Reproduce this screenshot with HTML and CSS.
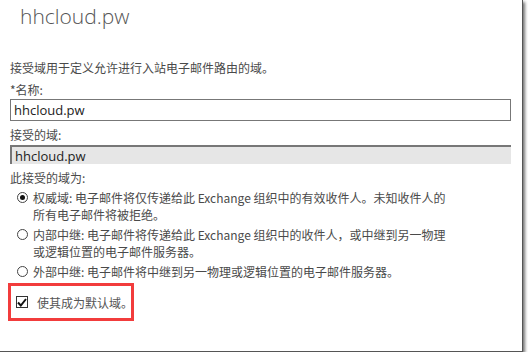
FILE: index.html
```html
<!DOCTYPE html>
<html lang="zh-CN">
<head>
  <meta charset="UTF-8">
  <link rel="stylesheet" href="styles.css">
  <title>hhcloud.pw</title>
</head>
<body>
  <div class="card">
    <h1 class="title">hhcloud.pw</h1>

    <div class="form">
      <p class="intro">接受域用于定义允许进行入站电子邮件路由的域。</p>

      <label class="label" for="name">*名称:</label>
      <input class="field" type="text" id="name" value="hhcloud.pw">

      <label class="label" for="domain">接受的域:</label>
      <input class="field field-disabled" type="text" id="domain" value="hhcloud.pw" disabled>

      <div class="label">此接受的域为:</div>

      <div class="options">
        <div class="option">
          <span class="radio checked"></span>
          <span class="option-text">权威域: 电子邮件将仅传递给此 Exchange 组织中的有效收件人。未知收件人的<br>所有电子邮件将被拒绝。</span>
        </div>
        <div class="option">
          <span class="radio"></span>
          <span class="option-text">内部中继: 电子邮件将传递给此 Exchange 组织中的收件人，或中继到另一物理<br>或逻辑位置的电子邮件服务器。</span>
        </div>
        <div class="option">
          <span class="radio"></span>
          <span class="option-text">外部中继: 电子邮件将中继到另一物理或逻辑位置的电子邮件服务器。</span>
        </div>
      </div>

      <div class="highlight">
        <span class="checkbox">
          <svg width="10" height="9" viewBox="0 0 10 9"><path d="M1 4.5 L3.8 7.5 L9 1" fill="none" stroke="#111" stroke-width="2"/></svg>
        </span>
        <span class="check-text">使其成为默认域。</span>
      </div>
    </div>
  </div>
</body>
</html>
```

FILE: styles.css
```css
body {
  margin: 0;
  background: #ffffff;
  font-family: "Segoe UI", "Noto Sans CJK SC", "Noto Sans", sans-serif;
  color: #4a4a4a;
}

.card {
  width: 523px;
  height: 352px;
  box-sizing: border-box;
  background: #fff;
  border-right: 1px solid #555;
  border-bottom: 1px solid #555;
  box-shadow: 2px 2px 3px rgba(0, 0, 0, 0.55);
  overflow: hidden;
}

.title {
  margin: 0;
  padding: 2px 0 0 20px;
  font-family: "Open Sans", "Noto Sans", sans-serif;
  font-weight: 300;
  font-size: 21px;
  line-height: 28px;
  color: #555;
}

.form {
  padding: 30px 0 0 10px;
  width: 501px;
}

.intro {
  margin: 0;
  font-size: 12px;
  line-height: 16px;
}

.label {
  display: block;
  margin-top: 6px;
  font-size: 12px;
  line-height: 16px;
}

.field {
  display: block;
  width: 501px;
  height: 22px;
  margin: 1px 0 0;
  padding: 0 3px;
  box-sizing: border-box;
  border: 1px solid #777;
  font-family: "Open Sans", "Noto Sans", sans-serif;
  font-size: 13px;
  color: #222;
  background: #fff;
}

.field-disabled {
  height: 19px;
  margin-top: 2px;
  border: none;
  border-top: 2px solid #777;
  border-left: 2px solid #777;
  background: #e6e6e6;
  color: #222;
}

.options {
  margin-top: 3px;
  padding-left: 7px;
}

.option {
  display: flex;
  align-items: flex-start;
  font-size: 12px;
  line-height: 17px;
  margin-bottom: 3px;
}

.radio {
  flex: none;
  width: 11px;
  height: 11px;
  margin: 3px 5px 0 0;
  border: 1px solid #444;
  border-radius: 50%;
  box-sizing: border-box;
  position: relative;
  background: #fff;
}

.radio.checked::after {
  content: "";
  position: absolute;
  left: 2px;
  top: 2px;
  width: 5px;
  height: 5px;
  border-radius: 50%;
  background: #111;
}

.highlight {
  display: flex;
  align-items: center;
  width: 126px;
  height: 38px;
  box-sizing: border-box;
  margin: 3px 0 0 -2px;
  padding-left: 5px;
  border: 3px solid #f23c3c;
}

.checkbox {
  flex: none;
  display: flex;
  align-items: center;
  justify-content: center;
  width: 12px;
  height: 12px;
  box-sizing: border-box;
  border: 1px solid #333;
  margin-right: 9px;
}

.check-text {
  white-space: nowrap;
  font-size: 12px;
  color: #555;
}
```
